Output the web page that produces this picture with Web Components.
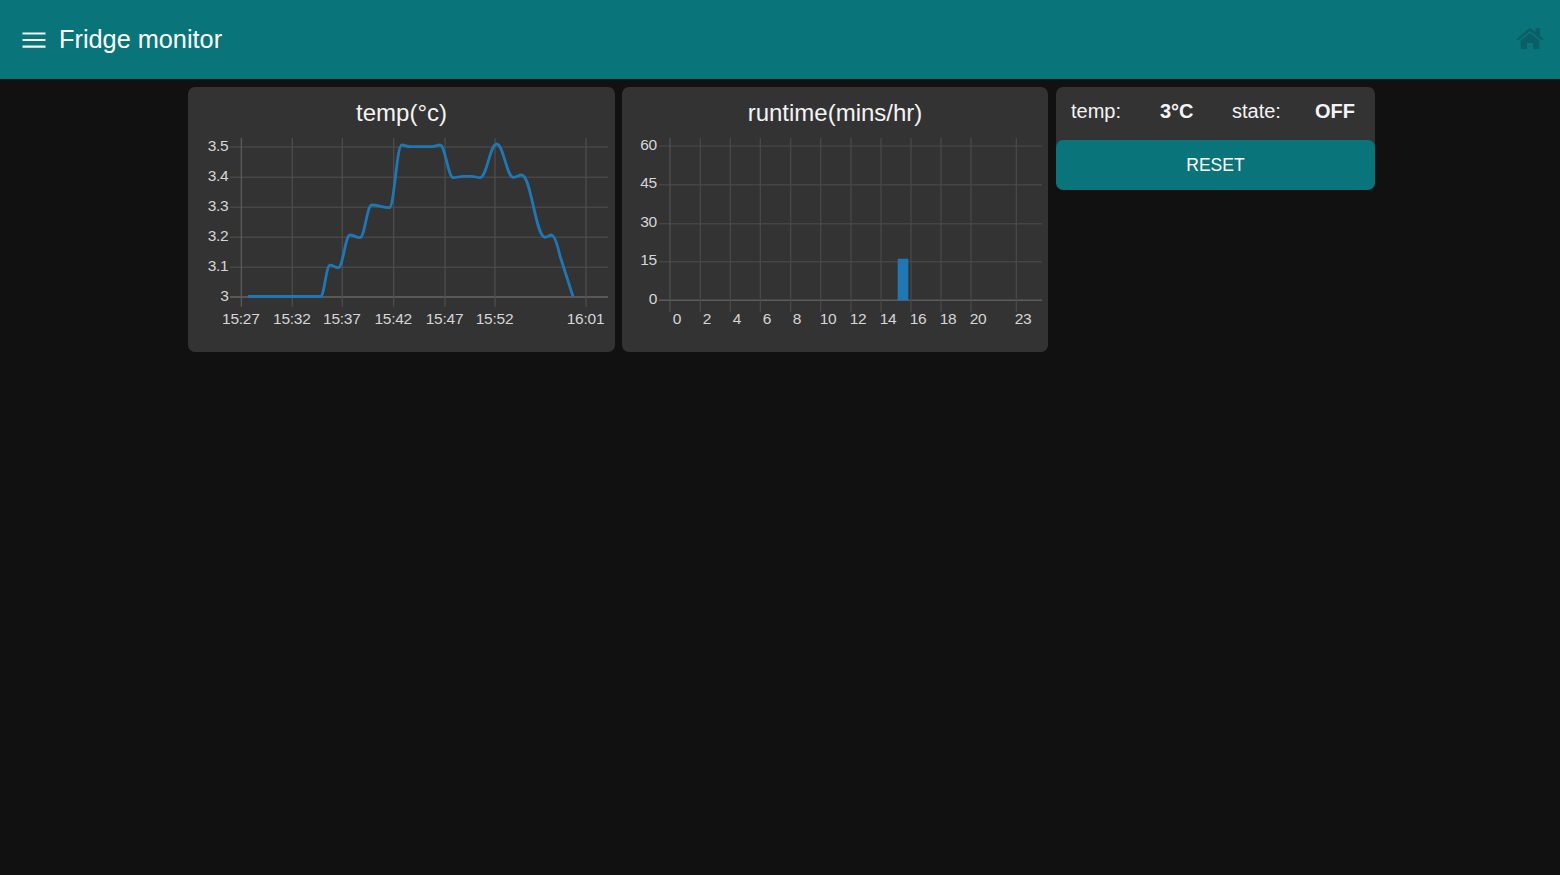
<!DOCTYPE html>
<html lang="en">
<head>
<meta charset="utf-8">
<title>Fridge monitor</title>
<style>
html,body{margin:0;padding:0;height:100%;background:#111;font-family:"Liberation Sans",Arial,sans-serif;}
</style>
</head>
<body>
<fridge-app>
  <fridge-header slot="header" title-text="Fridge monitor"></fridge-header>
  <chart-card style="--w:427px" heading="temp(°c)"><temp-chart></temp-chart></chart-card>
  <chart-card style="--w:426px;margin-left:7px" heading="runtime(mins/hr)"><runtime-chart></runtime-chart></chart-card>
  <status-card style="margin-left:8px"></status-card>
</fridge-app>
<script>
const NS='http://www.w3.org/2000/svg';
function el(parent,name,attrs,text){
  const n=document.createElementNS(NS,name);
  for(const k in attrs)n.setAttribute(k,attrs[k]);
  if(text!==undefined)n.textContent=text;
  parent.appendChild(n);return n;
}
const chartStyle=`<style>
:host{display:block}
svg{display:block}
text{font:15.5px "Liberation Sans",Arial,sans-serif;letter-spacing:-.25px;fill:#d6d6d6}
</style>`;

class FridgeApp extends HTMLElement{
  constructor(){super();this.attachShadow({mode:'open'}).innerHTML=`<style>
  :host{display:block;min-height:875px;background:#111}
  main{display:flex;align-items:flex-start;padding:8px 0 0 188px}
  </style><slot name="header"></slot><main><slot></slot></main>`;}
}
class FridgeHeader extends HTMLElement{
  constructor(){super();this.attachShadow({mode:'open'}).innerHTML=`<style>
  :host{display:flex;align-items:center;height:79px;background:#097479;color:#fff;padding:0 16px 0 19px;box-sizing:border-box}
  .t{font:25.3px/30px "Liberation Sans",Arial,sans-serif;margin-left:10px;margin-bottom:2px}
  .menu{width:30px;height:30px;display:block;fill:#f4f8f8}
  .home{margin-left:auto;width:28px;height:23px;display:block;fill:#0a5f66;margin-bottom:2px}
  </style>
  <svg class="menu" viewBox="0 0 30 30"><path d="M3.5 7.4h23v2.2h-23zM3.5 13.9h23v2.2h-23zM3.5 20.5h23v2.2h-23z"/></svg>
  <span class="t"></span>
  <svg class="home" viewBox="1516 27 28 23"><path d="M1530 27.7 1535.5 32.3V28H1540V36L1543.5 39 1542 40.7 1530 30.8 1518 40.7 1516.5 39ZM1530 33 1520.7 40.6V49H1527V43H1533V49H1539.3V40.6Z"/></svg>`;
  this.shadowRoot.querySelector('.t').textContent=this.getAttribute('title-text');}
}
class ChartCard extends HTMLElement{
  constructor(){super();this.attachShadow({mode:'open'}).innerHTML=`<style>
  :host{display:block;flex:none;width:var(--w);height:265px;background:#333;border-radius:7px;color:#eee;overflow:hidden}
  h2{margin:0;height:50px;font:400 24px/52px "Liberation Sans",Arial,sans-serif;text-align:center;color:#f4f4f4}
  </style><h2></h2><slot></slot>`;
  this.shadowRoot.querySelector('h2').textContent=this.getAttribute('heading');}
}
class TempChart extends HTMLElement{
  constructor(){super();const r=this.attachShadow({mode:'open'});r.innerHTML=chartStyle;
    const s=el(r,'svg',{width:427,height:215,viewBox:'188 137 427 215'});
    const ys=[[147,'3.5'],[177.3,'3.4'],[207.3,'3.3'],[237.3,'3.2'],[267.3,'3.1'],[297,'3']];
    ys.forEach(([y,t],i)=>{
      el(s,'line',{x1:230,x2:608,y1:y,y2:y,stroke:i==5?'#666':'#474747','stroke-width':1.6});
      el(s,'text',{x:228.5,y:y+3.9,'text-anchor':'end'},t);
    });
    [[241.3,'15:27'],[292.3,'15:32'],[342.3,'15:37'],[393.7,'15:42'],[445,'15:47'],[495,'15:52'],[586,'16:01']].forEach(([x,t],i)=>{
      el(s,'line',{x1:x,x2:x,y1:138,y2:306.7,stroke:i==0?'#5f5f5f':'#4f4f4f','stroke-width':1.2});
      el(s,'text',{x:x-.5,y:324,'text-anchor':'middle'},t);
    });
    const p=[[248,296.5],[320.5,296.5],[330,265.2],[338.3,267.7],[350,235],[360,237.7],[371.7,205],[389.3,207.7],[401.7,145],[410,146.7],[431.7,146.7],[440,145],[453.3,177.7],[463.3,176.3],[471.7,176.3],[480,177.7],[496.7,144],[513.3,177.3],[521.7,175],[545,237.3],[551.7,235]];
    let d='M'+p[0].join(' ');
    for(let i=1;i<p.length;i++){
      const a=p[i-1],b=p[i],k=(b[0]-a[0])*.4;
      d+=` C${a[0]+k} ${a[1]} ${b[0]-k} ${b[1]} ${b[0]} ${b[1]}`;
    }
    d+=' C555 236 557.5 245 560 256 L573 296.5';
    el(s,'path',{d,fill:'none',stroke:'#1f77b4','stroke-width':2.8,'stroke-linejoin':'round'});
  }
}
class RuntimeChart extends HTMLElement{
  constructor(){super();const r=this.attachShadow({mode:'open'});r.innerHTML=chartStyle;
    const s=el(r,'svg',{width:426,height:215,viewBox:'622 137 426 215'});
    [[146,'60',4],[184.7,'45',3.3],[223.7,'30',3.3],[261.7,'15',3.3],[300.3,'0',3.3]].forEach(([y,t,o],i)=>{
      el(s,'line',{x1:659,x2:1042,y1:y,y2:y,stroke:i==4?'#5c5c5c':'#454545','stroke-width':1.6});
      el(s,'text',{x:657,y:y+o,'text-anchor':'end'},t);
    });
    [670,700.3,730.3,760.3,790.7,820.7,851,881,911,941,971,1016.3].forEach((x,i)=>{
      el(s,'line',{x1:x,x2:x,y1:138,y2:312.3,stroke:i==0?'#525252':'#4a4a4a','stroke-width':1.2});
    });
    [[677,'0'],[707,'2'],[737,'4'],[767,'6'],[797,'8'],[828,'10'],[858,'12'],[888,'14'],[918,'16'],[948,'18'],[978,'20'],[1023,'23']].forEach(([x,t])=>{
      el(s,'text',{x,y:324,'text-anchor':'middle'},t);
    });
    el(s,'rect',{x:897.7,y:258.7,width:10.6,height:41.6,fill:'#1f77b4'});
  }
}
class StatusCard extends HTMLElement{
  constructor(){super();this.attachShadow({mode:'open'}).innerHTML=`<style>
  :host{display:block;flex:none;width:319px;background:#333;border-radius:7px;overflow:hidden;color:#f4f4f4;font:20px "Liberation Sans",Arial,sans-serif}
  .row{display:grid;grid-template-columns:89px 72px 83px auto;align-items:center;height:48px;padding:0 0 5px 15px}
  b{font-weight:700}
  button{display:block;width:100%;height:50px;border:0;border-radius:7px;background:#097479;color:#fff;font:17.5px "Liberation Sans",Arial,sans-serif;padding:0}
  </style>
  <div class="row"><span>temp:</span><b>3°C</b><span>state:</span><b>OFF</b></div>
  <button>RESET</button>`;}
}
customElements.define('fridge-app',FridgeApp);
customElements.define('fridge-header',FridgeHeader);
customElements.define('chart-card',ChartCard);
customElements.define('temp-chart',TempChart);
customElements.define('runtime-chart',RuntimeChart);
customElements.define('status-card',StatusCard);
</script>
</body>
</html>
